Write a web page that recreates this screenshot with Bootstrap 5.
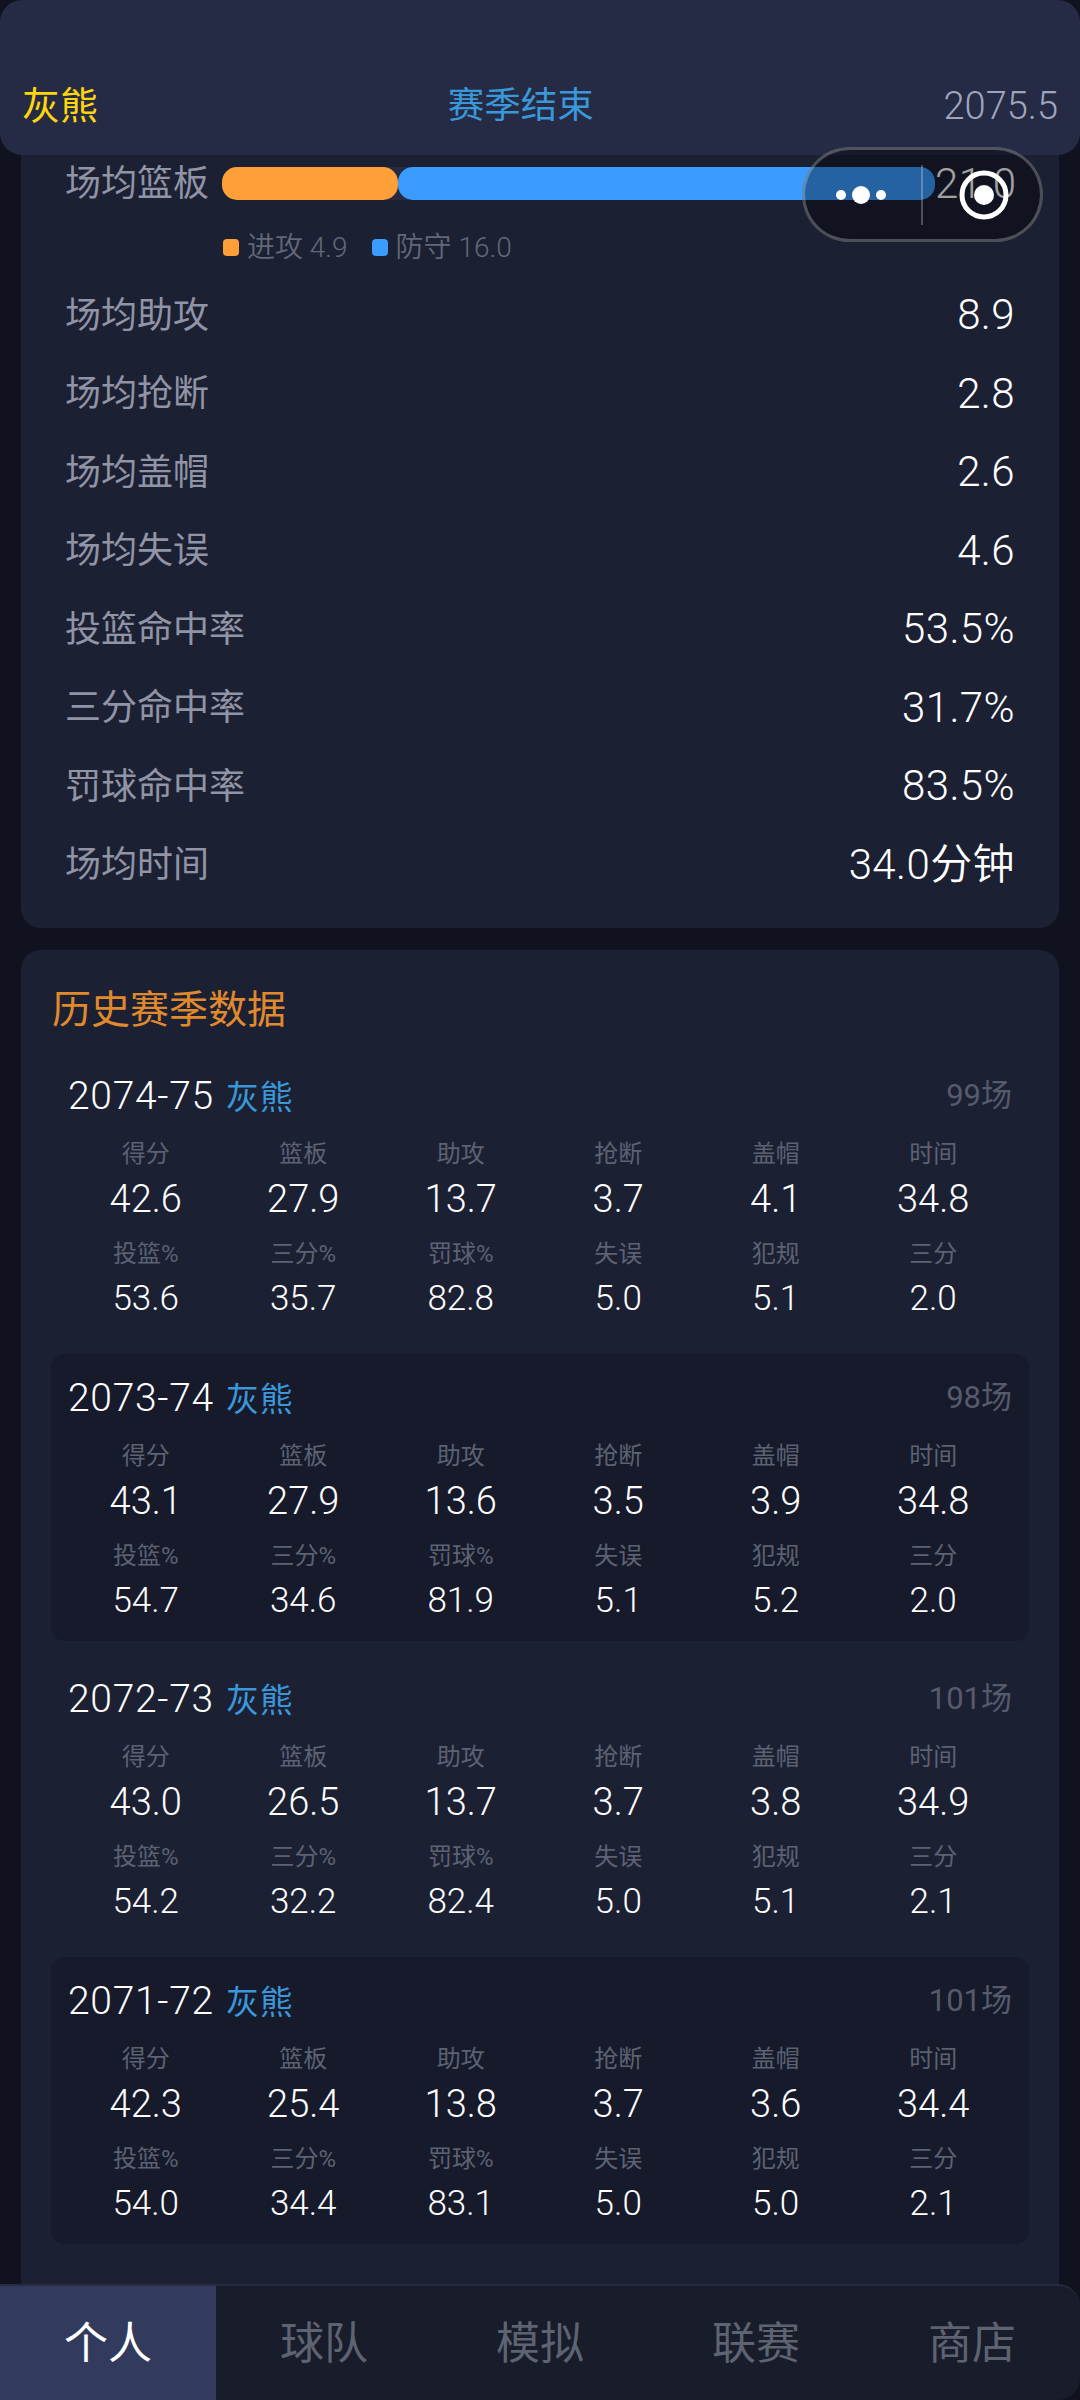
<!DOCTYPE html>
<html lang="zh-CN">
<head>
  <meta charset="UTF-8">
  <meta name="viewport" content="width=device-width, initial-scale=1.0">
  <title>灰熊 - 个人数据</title>
  <link href="https://cdn.jsdelivr.net/npm/bootstrap@5.3.0/dist/css/bootstrap.min.css" rel="stylesheet">
  <script src="https://cdn.jsdelivr.net/npm/bootstrap@5.3.0/dist/js/bootstrap.bundle.min.js"></script>
  <style>
    html, body {
      height: 2400px;
      overflow: hidden;
    }

    body {
      position: relative;
      background-color: #10131f;
      color: #fff;
      font-family: Roboto, "Noto Sans CJK SC", sans-serif;
    }

    .top-bar {
      height: 155px;
      padding: 84px 22px 0;
      background-color: #252a45;
      border-radius: 22px;
      font-size: 36.5px;
      line-height: 44px;
    }

    .top-team { color: #ffd60a; font-size: 38px; }
    .top-state { color: #3a98d8; }
    .top-date { color: #9fa6bc; font-size: 38px; font-weight: 350; }

    .scroll-area {
      height: 2129px;
      overflow: hidden;
      padding: 0 21px;
    }

    .panel {
      background-color: #1c2033;
      border-radius: 20px;
    }

    .panel-stats {
      border-radius: 0 0 20px 20px;
      padding: 0 44px 24.5px;
      margin-bottom: 22px;
    }

    .panel-history {
      padding: 35px 30px 0;
    }

    .stat-row {
      height: 78.5px;
      font-size: 36px;
    }

    .stat-row-first { height: 56px; }

    .stat-name {
      color: #9094a5;
      white-space: nowrap;
      flex-shrink: 0;
      padding-top: 2px;
    }

    .stat-val { font-size: 42px; font-weight: 350; letter-spacing: .4px; }

    .reb-bar {
      width: 713px;
      height: 33px;
      margin-left: 13px;
      margin-right: auto;
      flex-shrink: 0;
      background-color: #262b42;
      border-radius: 15px;
    }

    .reb-off {
      width: 176px;
      background-color: #ff9f38;
      border-radius: 15px;
    }

    .reb-def {
      background-color: #3a9cff;
      border-radius: 15px;
    }

    .reb-legend {
      height: 64.5px;
      padding: 9px 0 0 158px;
      font-size: 28px;
      line-height: 52px;
      color: #636879;
      font-weight: 350;
    }

    .swatch {
      width: 16px;
      height: 17px;
      border-radius: 4px;
    }

    .swatch-off { background-color: #ff9f38; }
    .swatch-def { background-color: #3a9cff; }

    .legend-gap { margin-right: 24px; }

    .history-title {
      font-size: 39px;
      line-height: 50px;
      color: #e08a2d;
      margin-bottom: 17.5px;
      padding-left: 1px;
    }

    .season {
      height: 286.5px;
      padding: 23.5px 17px 0 16px;
      margin-bottom: 15px;
      border-radius: 14px;
    }

    .season-alt { background-color: #161a2b; }

    .season-head {
      height: 40px;
      line-height: 40px;
      font-size: 39px;
      font-weight: 350;
      letter-spacing: .7px;
      margin-bottom: 23px;
      padding-left: 1px;
    }

    .season-team { color: #3a98d8; font-size: 33px; font-weight: 400; margin-left: 2px; }

    .season-games {
      font-size: 31px;
      font-weight: 400;
      letter-spacing: 0;
      color: #565b6c;
    }

    .cell {
      height: 82px;
      margin-bottom: 18px;
      text-align: center;
    }

    .cell-label {
      font-size: 24px;
      line-height: 30px;
      color: #5d6273;
      margin-bottom: 8px;
    }

    .cell-val {
      font-size: 38px;
      font-weight: 350;
      line-height: 44px;
    }

    .cell-val-sm { font-size: 35px; }

    .bottom-nav {
      position: absolute;
      left: 0;
      right: 0;
      bottom: 0;
      height: 116px;
      background-color: #181c2b;
      border-top: 2px solid #262b42;
      border-radius: 0 22px 22px 0;
      font-size: 44px;
      color: #5e6372;
    }

    .bottom-nav > div { width: 216px; padding-top: 2px; }

    .bottom-nav .tab-on {
      background-color: #323a5e;
      color: #fff;
    }

    .capsule {
      position: absolute;
      left: 802px;
      top: 147px;
      width: 241px;
      height: 95px;
      background-color: rgba(0, 0, 0, .37);
      border: 3px solid rgba(255, 255, 255, .25);
      border-radius: 48px;
    }

    .capsule svg { display: block; }
  </style>
</head>
<body>
  <!-- Top bar -->
  <header class="top-bar d-flex justify-content-between">
    <span class="top-team">灰熊</span>
    <span class="top-state">赛季结束</span>
    <span class="top-date">2075.5</span>
  </header>

  <div class="scroll-area">
    <!-- Averages -->
    <section class="panel panel-stats">
      <div class="stat-row stat-row-first d-flex align-items-center">
        <span class="stat-name">场均篮板</span>
        <div class="reb-bar d-flex">
          <div class="reb-off"></div>
          <div class="reb-def flex-grow-1"></div>
        </div>
        <span class="stat-val">21.0</span>
      </div>
      <div class="reb-legend d-flex align-items-center">
        <span class="swatch swatch-off me-2"></span><span class="legend-gap">进攻 4.9</span>
        <span class="swatch swatch-def me-2"></span><span>防守 16.0</span>
      </div>
      <div class="stat-row d-flex align-items-center justify-content-between"><span class="stat-name">场均助攻</span><span class="stat-val">8.9</span></div>
      <div class="stat-row d-flex align-items-center justify-content-between"><span class="stat-name">场均抢断</span><span class="stat-val">2.8</span></div>
      <div class="stat-row d-flex align-items-center justify-content-between"><span class="stat-name">场均盖帽</span><span class="stat-val">2.6</span></div>
      <div class="stat-row d-flex align-items-center justify-content-between"><span class="stat-name">场均失误</span><span class="stat-val">4.6</span></div>
      <div class="stat-row d-flex align-items-center justify-content-between"><span class="stat-name">投篮命中率</span><span class="stat-val">53.5%</span></div>
      <div class="stat-row d-flex align-items-center justify-content-between"><span class="stat-name">三分命中率</span><span class="stat-val">31.7%</span></div>
      <div class="stat-row d-flex align-items-center justify-content-between"><span class="stat-name">罚球命中率</span><span class="stat-val">83.5%</span></div>
      <div class="stat-row d-flex align-items-center justify-content-between"><span class="stat-name">场均时间</span><span class="stat-val">34.0分钟</span></div>
    </section>

    <!-- History -->
    <section class="panel panel-history">
      <div class="history-title">历史赛季数据</div>
      <div id="seasons"></div>
    </section>
  </div>

  <!-- Bottom tabs -->
  <nav class="bottom-nav d-flex">
    <div class="tab-on d-flex align-items-center justify-content-center">个人</div>
    <div class="d-flex align-items-center justify-content-center">球队</div>
    <div class="d-flex align-items-center justify-content-center">模拟</div>
    <div class="d-flex align-items-center justify-content-center">联赛</div>
    <div class="d-flex align-items-center justify-content-center">商店</div>
  </nav>

  <!-- Mini program capsule -->
  <div class="capsule">
    <svg width="235" height="89" viewBox="0 0 235 89">
      <circle cx="36" cy="45" r="5" fill="#fff"/>
      <circle cx="56" cy="45" r="9" fill="#fff"/>
      <circle cx="76" cy="45" r="5" fill="#fff"/>
      <rect x="116" y="15" width="2" height="60" fill="#fff" fill-opacity=".25"/>
      <circle cx="179" cy="45" r="22" fill="none" stroke="#fff" stroke-width="5"/>
      <circle cx="179" cy="45" r="10" fill="#fff"/>
    </svg>
  </div>

  <script>
    const labels = ['得分', '篮板', '助攻', '抢断', '盖帽', '时间', '投篮%', '三分%', '罚球%', '失误', '犯规', '三分'];
    const seasons = [
      ['2074-75', '99场', [42.6, 27.9, 13.7, 3.7, 4.1, 34.8, 53.6, 35.7, 82.8, 5.0, 5.1, 2.0]],
      ['2073-74', '98场', [43.1, 27.9, 13.6, 3.5, 3.9, 34.8, 54.7, 34.6, 81.9, 5.1, 5.2, 2.0]],
      ['2072-73', '101场', [43.0, 26.5, 13.7, 3.7, 3.8, 34.9, 54.2, 32.2, 82.4, 5.0, 5.1, 2.1]],
      ['2071-72', '101场', [42.3, 25.4, 13.8, 3.7, 3.6, 34.4, 54.0, 34.4, 83.1, 5.0, 5.0, 2.1]]
    ];

    let html = '';
    seasons.forEach(function (s, i) {
      const cells = s[2].map(function (v, j) {
        return `<div class="col cell"><div class="cell-label">${labels[j]}</div><div class="cell-val${j > 5 ? ' cell-val-sm' : ''}">${v.toFixed(1)}</div></div>`;
      }).join('');
      html += `<div class="season${i % 2 ? ' season-alt' : ''}">
        <div class="season-head d-flex justify-content-between">
          <span>${s[0]} <span class="season-team">灰熊</span></span>
          <span class="season-games">${s[1]}</span>
        </div>
        <div class="row row-cols-6 g-0">${cells}</div>
      </div>`;
    });
    document.getElementById('seasons').innerHTML = html + '<div class="season"></div>';
  </script>
</body>
</html>
